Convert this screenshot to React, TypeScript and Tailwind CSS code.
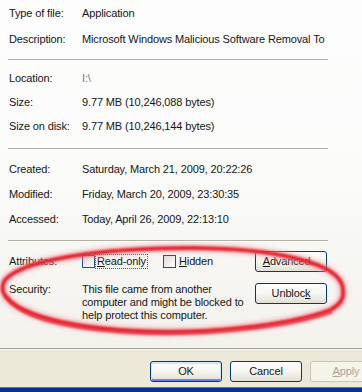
import React from "react";

const Sep = () => (
  <div className="h-[2px] -ml-px border-t border-[#b4b2a6] border-b border-b-white" />
);

const Row = ({ label, value, cls, valueCls }: { label: string; value: string; cls: string; valueCls?: string }) => (
  <div className={`flex items-center ${cls}`}>
    <div className="w-[73px] shrink-0 whitespace-nowrap">{label}</div>
    <div className={`w-[246px] whitespace-nowrap ${valueCls ?? ""}`}>{value}</div>
  </div>
);

const Check = () => (
  <div className="w-[13px] h-[13px] border border-[#1c5180] bg-gradient-to-br from-[#dcdcd7] to-white shrink-0" />
);

const XpButton = ({ children, extra }: { children: React.ReactNode; extra?: string }) => (
  <div
    className={`w-[72px] h-[21px] shrink-0 rounded-[3px] border border-[#003c74] bg-gradient-to-b from-white via-[#f6f5f1] to-[#e2dfd4] flex items-center justify-center ${extra ?? ""}`}
  >
    {children}
  </div>
);

export default function App() {
  return (
    <div className="w-[362px] h-[392px] overflow-hidden relative bg-[#ece9d8] text-[11px] leading-[13px] tracking-[-0.13px] text-[#161616] font-['Liberation_Sans',Arial,sans-serif]">
      <div className="h-[349px] bg-gradient-to-b from-[#fdfdfd] via-[#fbfbfa] to-[#f3f2ed] border-b border-[#9aa0a0] pl-[9px] pr-[34px]">
        <Row label="Type of file:" value="Application" cls="h-[26px]" />
        <Row label="Description:" value="Microsoft Windows Malicious Software Removal To" cls="h-[26px]" />
        <div className="h-[7px]" />
        <Sep />
        <div className="h-[5px]" />
        <Row label="Location:" value="I:\" cls="h-[24px]" valueCls="text-[#7a7a7a]" />
        <Row label="Size:" value="9.77 MB (10,246,088 bytes)" cls="h-[24px]" />
        <Row label="Size on disk:" value="9.77 MB (10,246,144 bytes)" cls="h-[24px]" />
        <div className="h-[10px]" />
        <Sep />
        <div className="h-[7px]" />
        <Row label="Created:" value="Saturday, March 21, 2009, 20:22:26" cls="h-[25px]" />
        <Row label="Modified:" value="Friday, March 20, 2009, 23:30:35" cls="h-[25px]" />
        <Row label="Accessed:" value="Today, April 26, 2009, 22:13:10" cls="h-[25px]" />
        <div className="h-[8px]" />
        <Sep />
        <div className="h-[9px]" />
        <div className="flex items-center h-[21px]">
          <div className="w-[73px] shrink-0">Attributes:</div>
          <div className="flex items-center w-[173px]">
            <Check />
            <span className="ml-[1px] px-[1px] outline outline-1 outline-dotted outline-[#555]">
              <u className="underline-offset-1">R</u>ead-only
            </span>
            <div className="ml-[16px]">
              <Check />
            </div>
            <span className="ml-[3px]">
              <u className="underline-offset-1">H</u>idden
            </span>
          </div>
          <XpButton>
            <span>
              <u className="underline-offset-1">A</u>dvanced...
            </span>
          </XpButton>
        </div>
        <div className="h-[10px]" />
        <div className="flex items-start">
          <div className="w-[73px] shrink-0 pt-[1px]">Security:</div>
          <div className="w-[173px] pt-[1px]">
            This file came from another
            <br />
            computer and might be blocked to
            <br />
            help protect this computer.
          </div>
          <div className="pt-[1px]">
            <XpButton>
              <span>
                Unbloc<u className="underline-offset-1">k</u>
              </span>
            </XpButton>
          </div>
        </div>
      </div>
      <div className="h-[38px] border-t border-t-[#f7f6f1] flex items-start pt-[11px] pl-[150px] gap-[8px]">
        <XpButton extra="shadow-[inset_0_1px_0_1px_#cee7ff,inset_0_-1px_0_1px_#6982ee]">OK</XpButton>
        <XpButton>Cancel</XpButton>
        <div className="w-[72px] h-[21px] shrink-0 rounded-[3px] border border-[#c9c7ba] bg-[#f5f4ea] flex items-center justify-center text-[#aca899]">
          <span>
            <u className="underline-offset-1">A</u>pply
          </span>
        </div>
      </div>
      <div className="h-[5px] bg-[#0b2f94] border-t border-[#4a78d8]" />
      <svg className="absolute left-0 top-0 pointer-events-none" width="362" height="392" viewBox="0 0 362 392">
        <defs>
          <filter id="soft" x="-10%" y="-10%" width="120%" height="120%">
            <feGaussianBlur stdDeviation="0.9" />
          </filter>
          <filter id="halo" x="-10%" y="-10%" width="120%" height="120%">
            <feGaussianBlur stdDeviation="2.2" />
          </filter>
        </defs>
        <path
          d="M 343 290 C 343 262, 270 248, 190 248 C 100 248, 22 260, 5 280 C -8 300, 30 323, 120 330 C 200 336, 290 325, 330 310 C 342 304, 344 296, 343 290 Z"
          fill="none"
          stroke="#f29aa3"
          strokeWidth="9"
          opacity="0.55"
          filter="url(#halo)"
        />
        <path
          d="M 343 290 C 343 262, 270 248, 190 248 C 100 248, 22 260, 5 280 C -8 300, 30 323, 120 330 C 200 336, 290 325, 330 310 C 342 304, 344 296, 343 290 Z"
          fill="none"
          stroke="#e3202f"
          strokeWidth="4"
          filter="url(#soft)"
        />
        <path
          d="M 6 296 C 20 318, 60 327, 120 332 C 200 338, 290 327, 332 312"
          fill="none"
          stroke="#e52a38"
          strokeWidth="3"
          opacity="0.8"
          filter="url(#soft)"
        />
      </svg>
    </div>
  );
}
